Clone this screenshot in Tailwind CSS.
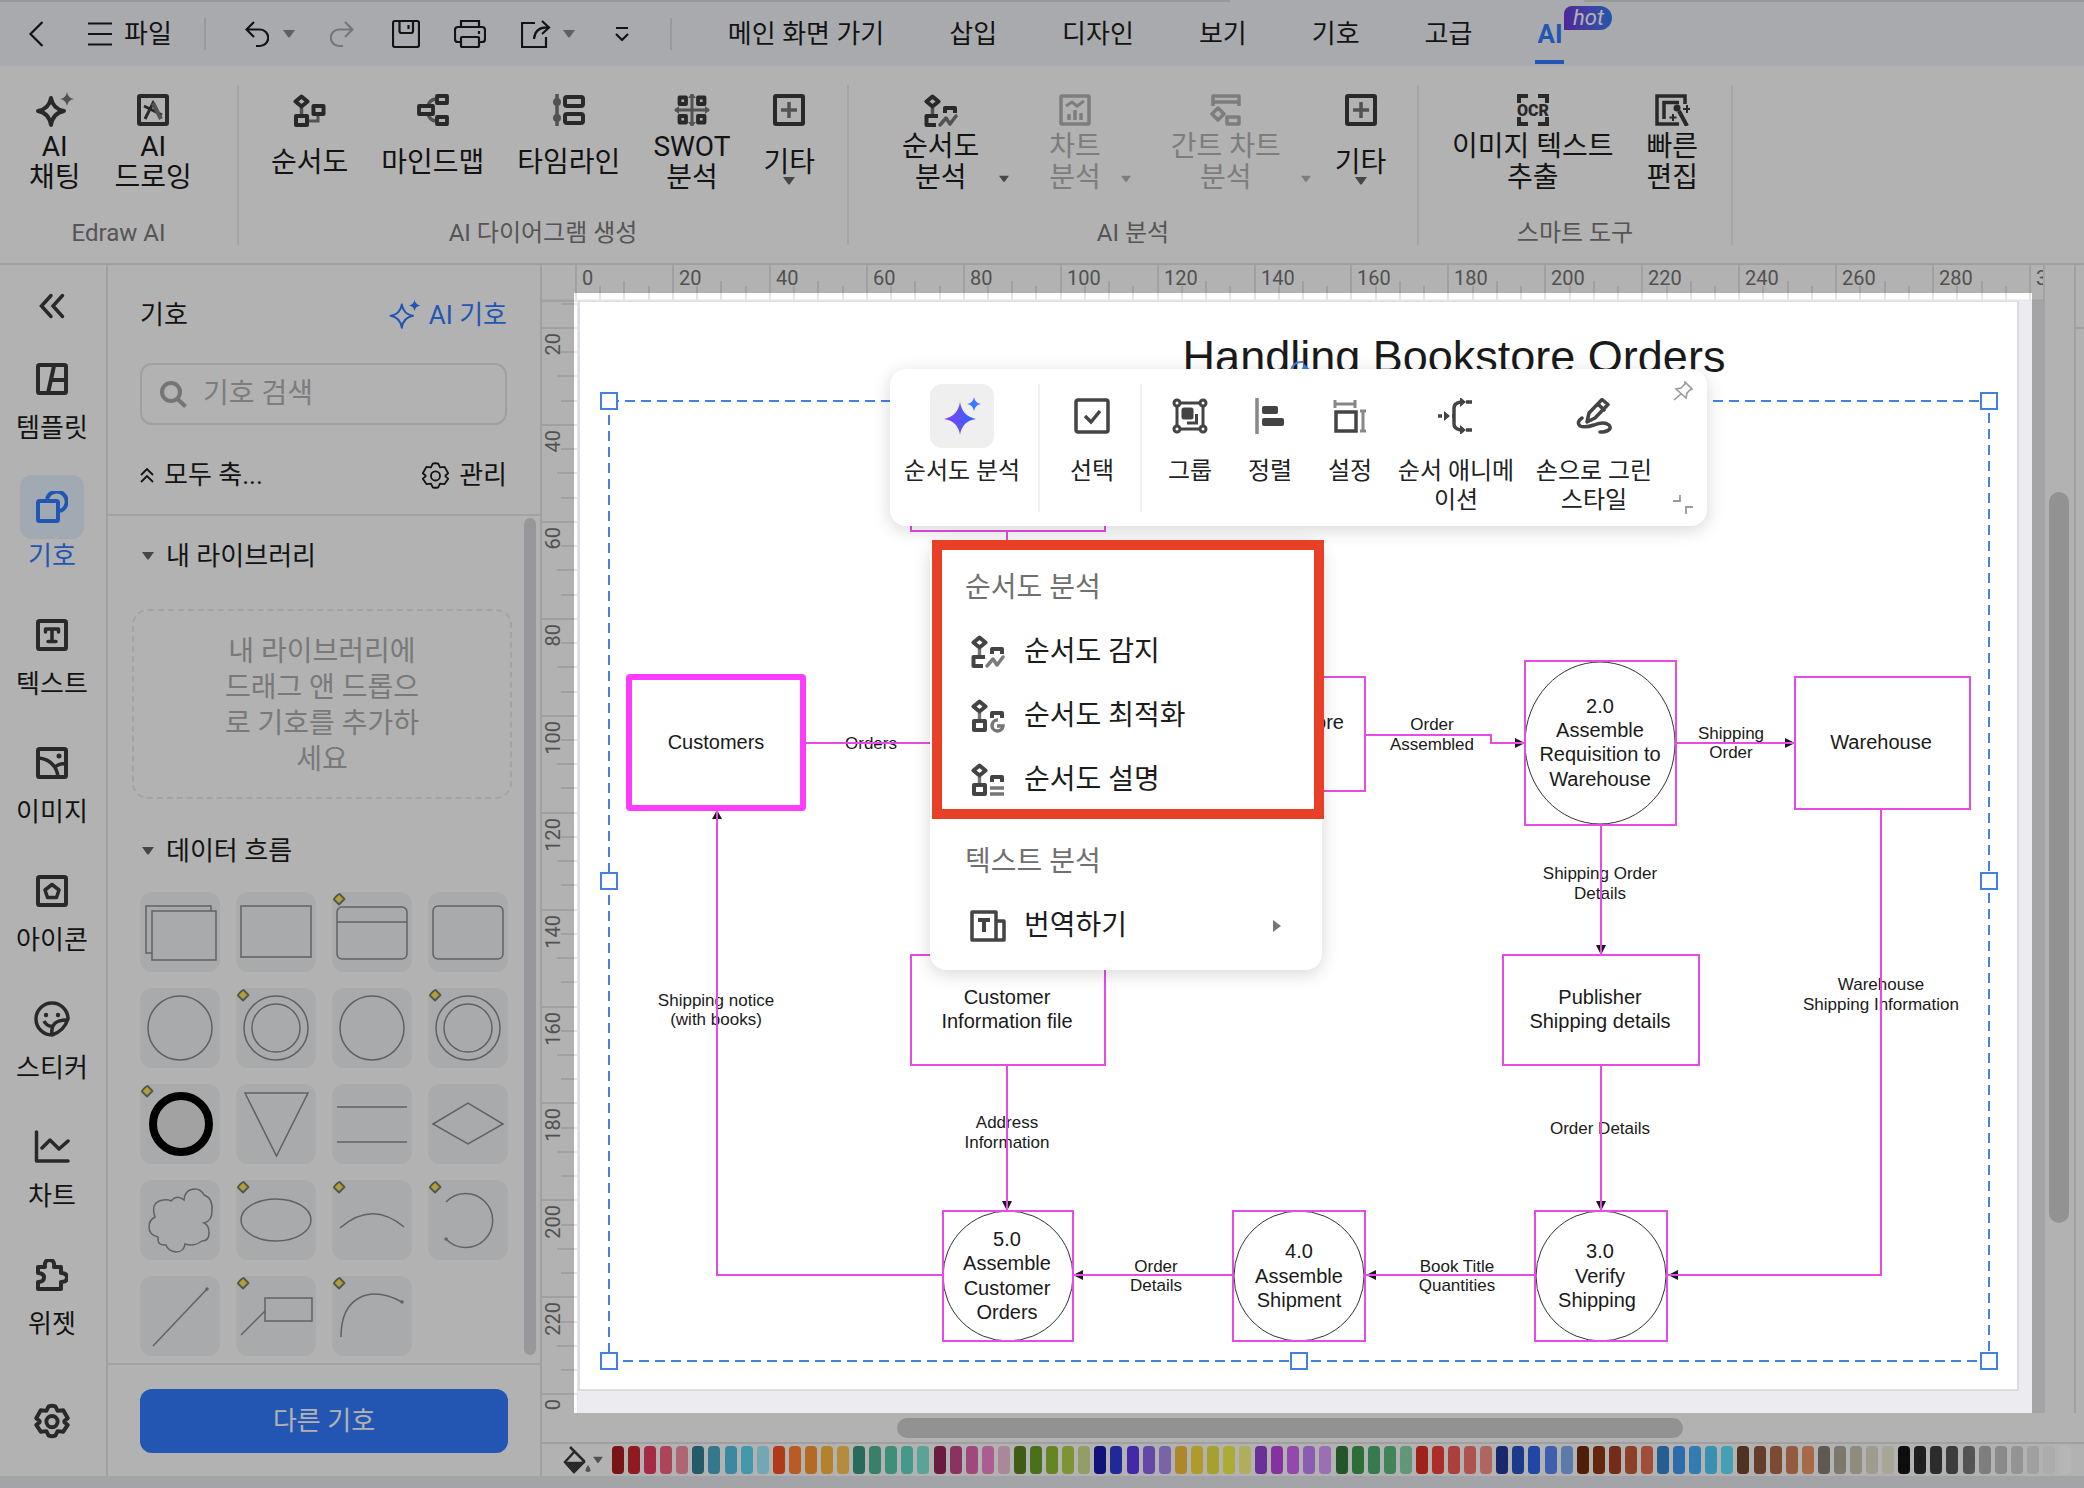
<!DOCTYPE html>
<html lang="ko">
  <head>
    <meta charset="UTF-8" />
    <meta name="viewport" content="width=device-width, initial-scale=1.0" />
    <title>Handling Bookstore Orders</title>
    <script src="https://cdn.jsdelivr.net/npm/@tailwindcss/browser@4"></script>
  </head>
  <body
    class="relative flex flex-col h-screen overflow-hidden bg-white text-[#1c1c1c] font-[Roboto,'Noto_Sans_CJK_KR',sans-serif]"
  >
    <!-- shared icon shapes -->
    <svg class="hidden">
      <symbol id="caret" viewBox="0 0 12 8"><path d="M0 0h12L7 7q-1 1-2 0z" fill="currentColor" /></symbol>
      <symbol id="flow-top" viewBox="0 0 36 34">
        <path d="M9.500 14v8" stroke="#787878" stroke-width="3.500" fill="none" />
        <path d="M9.500 2.500l6 5-6 5-6-5z" fill="none" stroke="currentColor" stroke-width="4" stroke-linejoin="round" />
      </symbol>
      <symbol id="flow-detect" viewBox="0 0 36 34">
        <use href="#flow-top" />
        <path d="M22 19v-5h10v5M15 22H3.500v9H13" fill="none" stroke="currentColor" stroke-width="4" stroke-linejoin="round" />
        <path d="M17 31l6-7 4 6 6-8" fill="none" stroke="currentColor" opacity=".7" stroke-width="3.500" stroke-linejoin="round" stroke-linecap="round" />
      </symbol>
      <symbol id="plus-box" viewBox="0 0 32 32">
        <rect x="2" y="2" width="28" height="28" rx="1" fill="none" stroke="currentColor" stroke-width="4" />
        <path d="M16 8v16M8 16h16" stroke="#787878" stroke-width="3.500" />
      </symbol>
      <symbol id="gear" viewBox="0 0 32 32">
        <path d="M13 3q3-1 6 0l2 4 5-.5 4 7-3 2.500v1l3 2.500-4 6-5-.5-2 4q-3 1-6 0l-2-4-5 .5-4-6 3-2.500v-1L2 13.500l4-7 5 .5z" fill="none" stroke="currentColor" stroke-linejoin="round" />
        <circle cx="16" cy="16.500" r="5" fill="none" stroke="currentColor" />
      </symbol>
      <symbol id="adjust" viewBox="0 0 14 14">
        <path d="M7 1.500L12.500 7 7 12.500 1.500 7z" fill="#ffe64f" stroke="#777" stroke-width="1.800" stroke-linejoin="round" />
      </symbol>
    </svg>

    <!-- title bar -->
    <header class="relative flex items-center h-[66px] shrink-0 pt-0.5 bg-[#f2f4f9] text-[26px] leading-8 whitespace-nowrap pl-7">
      <div class="absolute inset-x-0 top-0 flex justify-between">
        <div class="h-0.5 w-[59%] bg-[#dcdcdc]"></div>
        <div class="h-0.5 w-[24%] bg-[#dcdcdc]"></div>
      </div>
      <button aria-label="back"><svg class="w-4 h-7" viewBox="0 0 16 28" fill="none" stroke="currentColor" stroke-width="2.200"><path d="M14.500 2L2.500 14l12 12" /></svg></button>
      <button class="flex items-center gap-3 ml-11">
        <svg class="w-6 h-6" viewBox="0 0 24 24" stroke="currentColor" stroke-width="2.200"><path d="M0 1.500h24M0 12h24M0 22.500h24" /></svg>
        파일
      </button>
      <div class="ml-8 w-0.5 h-8 bg-[#dcdde2]"></div>
      <button class="ml-[39px]" aria-label="undo"><svg class="w-6 h-7" viewBox="0 0 24 28" fill="none" stroke="currentColor" stroke-width="2.200"><path d="M9 2L1.500 9.500 9 17M2 9.500h13a8 8 0 010 16.500h-4" /></svg></button>
      <svg class="ml-[14px] w-3 h-2 text-[#8a8a8a]"><use href="#caret" /></svg>
      <button class="ml-[35px] text-[#a8a9ad]" aria-label="redo"><svg class="w-6 h-7" viewBox="0 0 24 28" fill="none" stroke="currentColor" stroke-width="2.200"><path d="M15 2l7.500 7.500L15 17M22 9.500H9a8 8 0 000 16.500h4" /></svg></button>
      <button class="ml-[38px]" aria-label="save"><svg class="w-7 h-7" viewBox="0 0 28 28" fill="none" stroke="currentColor" stroke-width="2.200"><rect x="1" y="1" width="26" height="26" rx="2" /><path d="M7.500 1v10q0 2 2 2h9.500q2 0 2-2V1M16.500 5v4" /></svg></button>
      <button class="ml-[34px]" aria-label="print"><svg class="w-8 h-7" viewBox="0 0 32 28" fill="none" stroke="currentColor" stroke-width="2.200"><path d="M7 7V1h18v6M7 22H4q-3 0-3-3v-9q0-3 3-3h24q3 0 3 3v9q0 3-3 3h-3M25 11v3" /><rect x="7" y="17" width="18" height="10" rx="1" /></svg></button>
      <button class="ml-[35px]" aria-label="export"><svg class="w-[30px] h-7" viewBox="0 0 30 28" fill="none" stroke="currentColor" stroke-width="2.200"><path d="M14 3H1v24h24V17M21 1l7 6.500-7 6.500M28 7.500q-14-1-15 11.500" /></svg></button>
      <svg class="ml-3 w-3 h-2 text-[#8a8a8a]"><use href="#caret" /></svg>
      <button class="ml-10" aria-label="more"><svg class="w-[14px] h-4" viewBox="0 0 14 16" fill="none" stroke="currentColor" stroke-width="2.200"><path d="M1 2h12M1 8l6 6 6-6" /></svg></button>
      <div class="ml-[41px] w-0.5 h-8 bg-[#dcdde2]"></div>
      <nav class="flex items-center gap-[65px] ml-14 h-full">
        <button>메인 화면 가기</button>
        <button>삽입</button>
        <button>디자인</button>
        <button>보기</button>
        <button>기호</button>
        <button>고급</button>
        <button class="relative h-full font-bold text-[#337cff]">
          AI
          <span class="absolute left-[27px] top-1 w-12 h-6 rounded-tl-lg rounded-tr-xl rounded-br-xl text-[22px] leading-[23px] italic font-normal text-white bg-linear-to-r from-[#7036d8] to-[#2f7cf6]">hot</span>
          <span class="absolute -inset-x-0.5 bottom-0.5 h-1 bg-[#337cff]"></span>
        </button>
      </nav>
    </header>

    <!-- ribbon -->
    <section class="flex items-start h-[199px] shrink-0 pt-[19px] border-b-2 border-[#e4e4e4] text-[28px] leading-[31px] text-[#1c1c1c] whitespace-nowrap">
      <div class="w-[239px] h-40 border-r-2 border-[#ececec] pt-[9px]">
        <div class="flex gap-[34px] pl-[29px]">
          <button class="flex flex-col items-center gap-[5px]">
            <svg class="w-10 h-9 -my-0.5 text-[#3c3c3c]" viewBox="0 0 40 36"><path d="M16 6q2 11 13 13-11 2-13 14Q14 21 3 19q11-2 13-13z" fill="none" stroke="currentColor" stroke-width="4" stroke-linejoin="round" /><path d="M32 0q1 6 7 7-6 1-7 7-1-6-7-7 6-1 7-7z" fill="#787878" /></svg>
            <span class="flex items-center h-[62px]">AI<br />채팅</span>
          </button>
          <button class="flex flex-col items-center gap-[5px]">
            <svg class="w-8 h-8 text-[#3c3c3c]" viewBox="0 0 32 32"><rect x="2" y="2" width="28" height="28" rx="1" fill="none" stroke="currentColor" stroke-width="4" /><path d="M8 25l8-16 4 8M7 12l18 9" stroke="currentColor" stroke-width="3" fill="none" /><path d="M16 9l8 16" stroke="#787878" stroke-width="4" /></svg>
            <span class="flex items-center h-[62px]">AI<br />드로잉</span>
          </button>
        </div>
        <p class="mt-[25px] text-center text-[24px] leading-[30px] text-[#7a7a7a]">Edraw AI</p>
      </div>
      <div class="w-[610px] h-40 border-r-2 border-[#ececec] pt-[9px]">
        <div class="flex justify-center gap-[33px]">
          <button class="flex flex-col items-center gap-[5px]">
            <svg class="w-9 h-[34px] -mb-0.5 text-[#3c3c3c]" viewBox="0 0 36 34"><use href="#flow-top" /><path d="M16 27h10v-6" fill="none" stroke="#787878" stroke-width="3" /><path d="M4 22h11v9H4zM21.500 12h10v8h-10z" fill="none" stroke="currentColor" stroke-width="4" stroke-linejoin="round" /></svg>
            <span class="flex items-center h-[62px]">순서도</span>
          </button>
          <button class="flex flex-col items-center gap-[5px]">
            <svg class="w-8 h-8 text-[#3c3c3c]" viewBox="0 0 32 32" fill="none"><path d="M20 5q-8 0-9 8M20 27q-8 0-9-8" stroke="#787878" stroke-width="3.500" /><path d="M2 12h14v8H2zM20 2h10v7H20zM20 23h10v7H20z" stroke="currentColor" stroke-width="3.800" stroke-linejoin="round" /></svg>
            <span class="flex items-center h-[62px]">마인드맵</span>
          </button>
          <button class="flex flex-col items-center gap-[5px]">
            <svg class="w-8 h-8 text-[#3c3c3c]" viewBox="0 0 32 32" fill="none"><path d="M4 0v34" stroke="#787878" stroke-width="3.500" /><circle cx="4" cy="8" r="4" fill="#787878" /><circle cx="4" cy="24" r="4" fill="#787878" /><rect x="12" y="3" width="18" height="9" rx="2" stroke="currentColor" stroke-width="4" /><rect x="12" y="20" width="18" height="9" rx="2" stroke="currentColor" stroke-width="4" /></svg>
            <span class="flex items-center h-[62px]">타임라인</span>
          </button>
          <button class="flex flex-col items-center gap-[5px]">
            <svg class="w-9 h-8 text-[#3c3c3c]" viewBox="0 0 36 32" fill="none"><path d="M18 0v32M1 16h34" stroke="#787878" stroke-width="3" /><path d="M14 4l4-5 4 5zM14 28l4 5 4-5zM5 12l-5 4 5 4zM31 12l5 4-5 4z" fill="#787878" /><path d="M5.500 3.500h6.500v6.500H5.500zM24 3.500h6.500v6.500H24zM5.500 22h6.500v6.500H5.500zM24 22h6.500v6.500H24z" stroke="currentColor" stroke-width="3.800" stroke-linejoin="round" /></svg>
            <span class="flex items-center h-[62px]">SWOT<br />분석</span>
          </button>
          <button class="relative flex flex-col items-center gap-[5px]">
            <svg class="w-8 h-8 text-[#3c3c3c]"><use href="#plus-box" /></svg>
            <span class="flex items-center h-[62px]">기타</span>
            <svg class="absolute bottom-2 w-3 h-2 text-[#666]"><use href="#caret" /></svg>
          </button>
        </div>
        <p class="mt-[25px] text-center text-[24px] leading-[30px] text-[#7a7a7a]">AI 다이어그램 생성</p>
      </div>
      <div class="w-[570px] h-40 border-r-2 border-[#ececec] pt-[9px]">
        <div class="flex gap-10 pl-[53px]">
          <div class="flex items-end gap-5">
            <button class="flex flex-col items-center gap-[5px]">
              <svg class="w-9 h-[34px] -mb-0.5 text-[#3c3c3c]"><use href="#flow-detect" /></svg>
              <span class="flex items-center h-[62px]">순서도<br />분석</span>
            </button>
            <svg class="mb-2.5 w-2.5 h-2 text-[#666]"><use href="#caret" /></svg>
          </div>
          <div class="flex items-end gap-5 text-[#b4b4b4]">
            <button class="flex flex-col items-center gap-[5px]" disabled>
              <svg class="w-8 h-8" viewBox="0 0 32 32" fill="none" stroke="currentColor"><rect x="2" y="2" width="28" height="28" rx="1" stroke-width="3.500" /><path d="M7 12l6-4 5 4 7-5" stroke-width="3" /><path d="M10 26v-6M16 26V16M22 26v-7" stroke-width="3.500" /></svg>
              <span class="flex items-center h-[62px]">차트<br />분석</span>
            </button>
            <svg class="mb-2.5 w-2.5 h-2"><use href="#caret" /></svg>
          </div>
          <div class="flex items-end gap-5 text-[#b4b4b4]">
            <button class="flex flex-col items-center gap-[5px]" disabled>
              <svg class="w-8 h-8" viewBox="0 0 32 32" fill="none" stroke="currentColor"><path d="M3 12V2h26v10M3 8h26M8 14l6 6-6 6-6-6zM17 23h12v7H17z" stroke-width="3.500" stroke-linejoin="round" /></svg>
              <span class="flex items-center h-[62px]">간트 차트<br />분석</span>
            </button>
            <svg class="mb-2.5 w-2.5 h-2"><use href="#caret" /></svg>
          </div>
          <button class="relative flex flex-col items-center gap-[5px] -ml-4">
            <svg class="w-8 h-8 text-[#3c3c3c]"><use href="#plus-box" /></svg>
            <span class="flex items-center h-[62px]">기타</span>
            <svg class="absolute bottom-2 w-3 h-2 text-[#666]"><use href="#caret" /></svg>
          </button>
        </div>
        <p class="mt-[25px] text-center text-[24px] leading-[30px] text-[#7a7a7a]">AI 분석</p>
      </div>
      <div class="w-[314px] h-40 border-r-2 border-[#ececec] pt-[9px]">
        <div class="flex justify-center gap-[33px]">
          <button class="flex flex-col items-center gap-[5px]">
            <svg class="w-9 h-8 text-[#3c3c3c]" viewBox="0 0 36 32"><path d="M4 9V2h9M23 2h9v7M4 23v7h9M23 30h9v-7" fill="none" stroke="currentColor" stroke-width="4" /><text x="18" y="22" text-anchor="middle" font-size="16" font-weight="900" fill="currentColor">OCR</text></svg>
            <span class="flex items-center h-[62px]">이미지 텍스트<br />추출</span>
          </button>
          <button class="flex flex-col items-center gap-[5px]">
            <svg class="w-9 h-8 text-[#3c3c3c]" viewBox="0 0 36 32" fill="none" stroke="currentColor"><path d="M31 10V2H3v28h22M25 8.500H10V25" stroke-width="3.500" /><path d="M25 17l8 15" stroke-width="4" /><circle cx="23" cy="14" r="3.500" fill="currentColor" stroke="none" /><path d="M33 11v8M29 15h8M19 20v7M15.500 23.500h7" stroke-width="2" /></svg>
            <span class="flex items-center h-[62px]">빠른<br />편집</span>
          </button>
        </div>
        <p class="mt-[25px] text-center text-[24px] leading-[30px] text-[#7a7a7a]">스마트 도구</p>
      </div>
    </section>

    <main class="flex flex-1 min-h-0">
      <!-- icon rail -->
      <aside class="flex flex-col items-center w-[108px] shrink-0 pr-0.5 border-r-2 border-[#e6e6e6] text-[26px] leading-[34px] whitespace-nowrap">
        <button class="mt-7 mb-7 text-[#3c3c3c]" aria-label="collapse"><svg class="w-[26px] h-[26px]" viewBox="0 0 26 26" fill="none" stroke="currentColor" stroke-width="3.500" stroke-linecap="round"><path d="M12 2.500L2.500 13l9.500 10.500M23.500 2.500L14 13l9.500 10.500" /></svg></button>
        <button class="flex flex-col items-center h-32">
          <span class="grid place-items-center size-16 rounded-xl text-[#3c3c3c]"><svg class="size-8" viewBox="0 0 32 32" fill="none" stroke="currentColor" stroke-width="4"><rect x="2" y="2" width="28" height="28" rx="1.500" /><path d="M18 3l-6 27M15 17h15" /></svg></span>
          템플릿
        </button>
        <button class="flex flex-col items-center h-32 text-[#337cff]">
          <span class="grid place-items-center size-16 rounded-xl bg-[#e7f4ff]"><svg class="size-8" viewBox="0 0 32 32" fill="none" stroke="currentColor" stroke-width="4"><rect x="2" y="10" width="20" height="20" rx="1.500" /><path d="M11 8a10 10 0 1113 12" /></svg></span>
          기호
        </button>
        <button class="flex flex-col items-center h-32">
          <span class="grid place-items-center size-16 rounded-xl text-[#3c3c3c]"><svg class="size-8" viewBox="0 0 32 32" fill="none" stroke="currentColor" stroke-width="4"><rect x="2" y="2" width="28" height="28" rx="1.500" /><path d="M9.500 13v-3h13v3M16 10v12M12 22.500h8" stroke-width="3.500" stroke-linecap="round" stroke-linejoin="round" /></svg></span>
          텍스트
        </button>
        <button class="flex flex-col items-center h-32">
          <span class="grid place-items-center size-16 rounded-xl text-[#3c3c3c]"><svg class="size-8" viewBox="0 0 32 32" fill="none" stroke="currentColor" stroke-width="4"><rect x="2" y="2" width="28" height="28" rx="1.500" /><path d="M3 11q16 2 19 18M18 21q5-5 11-4" stroke-width="3.500" /><circle cx="23" cy="9" r="2.500" fill="currentColor" stroke="none" /></svg></span>
          이미지
        </button>
        <button class="flex flex-col items-center h-32">
          <span class="grid place-items-center size-16 rounded-xl text-[#3c3c3c]"><svg class="size-8" viewBox="0 0 32 32" fill="none" stroke="currentColor" stroke-width="4"><rect x="2" y="2" width="28" height="28" rx="1.500" /><path d="M16 9.500l7 5.500-2.500 7.500h-9L9 15z" stroke-width="3.500" stroke-linejoin="round" /></svg></span>
          아이콘
        </button>
        <button class="flex flex-col items-center h-32">
          <span class="grid place-items-center size-16 rounded-xl text-[#3c3c3c]"><svg class="size-9" viewBox="0 0 36 36" fill="none" stroke="currentColor" stroke-width="3.500"><path d="M18 34A16 16 0 1134 18Q30 30 18 34zM18 34q-2-16 16-15M10 20q3 6 9 5" /><circle cx="12" cy="14" r="2.200" fill="currentColor" stroke="none" /><circle cx="24" cy="14" r="2.200" fill="currentColor" stroke="none" /></svg></span>
          스티커
        </button>
        <button class="flex flex-col items-center h-32">
          <span class="grid place-items-center size-16 rounded-xl text-[#3c3c3c]"><svg class="size-9" viewBox="0 0 36 36" fill="none" stroke="currentColor" stroke-width="3.500" stroke-linecap="round" stroke-linejoin="round"><path d="M2.500 3v29H34M8 19l8-8 9 9 9-8" /></svg></span>
          차트
        </button>
        <button class="flex flex-col items-center h-32">
          <span class="grid place-items-center size-16 rounded-xl text-[#3c3c3c]"><svg class="size-8" viewBox="0 0 32 32" fill="none" stroke="currentColor" stroke-width="4" stroke-linejoin="round"><path d="M2 8h7q-1-7 4.500-7T18 8h7v6q6 0 6 4.500T25 23v7H2v-7q6 0 6-4.500T2 14z" /></svg></span>
          위젯
        </button>
        <button class="mt-8 text-[#3c3c3c]" aria-label="settings"><svg class="size-9" stroke-width="3.500"><use href="#gear" /></svg></button>
      </aside>

      <!-- symbol library -->
      <aside class="flex flex-col w-[434px] shrink-0 border-r-2 border-[#e6e6e6] text-[26px] leading-8 whitespace-nowrap">
        <div class="h-[249px] shrink-0 pl-8 pr-[33px] pt-[34px]">
          <div class="flex justify-between">
            <h2>기호</h2>
            <button class="flex items-center gap-2 text-[#337cff]"><svg class="size-8" viewBox="0 0 40 40"><path d="M16 7q2 12 14 14-12 2-14 15-2-13-14-15 12-2 14-14z" fill="none" stroke="currentColor" stroke-width="2.500" stroke-linejoin="round" /><path d="M32 1q1 6 7 7-6 1-7 7-1-6-7-7 6-1 7-7z" fill="currentColor" /></svg>AI 기호</button>
          </div>
          <label class="flex items-center gap-4 mt-8 h-[62px] pl-[18px] border-2 border-[#e4e4e4] rounded-xl">
            <svg class="size-[27px] shrink-0 text-[#a8a8a8]" viewBox="0 0 27 27" fill="none" stroke="currentColor" stroke-width="4"><circle cx="11" cy="11" r="9" /><path d="M17.500 18l8 7.500" /></svg>
            <input class="w-full text-[28px] outline-none placeholder:text-[#b4b4b4]" type="text" placeholder="기호 검색" aria-label="기호 검색" />
          </label>
          <div class="flex justify-between mt-[34px]">
            <button class="flex items-center gap-2.5"><svg class="w-3.5 h-4" viewBox="0 0 14 16" fill="none" stroke="currentColor" stroke-width="1.800"><path d="M1 8l6-6 6 6M1 15l6-6 6 6" /></svg>모두 축...</button>
            <button class="flex items-center gap-[9px]"><svg class="size-[29px]" stroke-width="2"><use href="#gear" /></svg>관리</button>
          </div>
        </div>
        <div class="relative flex-1 min-h-0 border-y-2 border-[#e8e8e8]">
          <div class="absolute right-1 inset-y-0.5 bottom-2 w-3 rounded-full bg-[#dad9de]"></div>
          <button class="flex items-center gap-3 ml-[34px] mt-6"><svg class="w-3 h-2 text-[#666]"><use href="#caret" /></svg>내 라이브러리</button>
          <p class="ml-6 mt-[37px] w-[380px] h-[190px] py-[23px] border-2 border-dashed border-[#eaeaea] rounded-2xl text-center text-[28px] leading-9 text-[#aeaeae]">
            내 라이브러리에<br />드래그 앤 드롭으<br />로 기호를 추가하<br />세요
          </p>
          <button class="flex items-center gap-3 ml-[34px] mt-9"><svg class="w-3 h-2 text-[#666]"><use href="#caret" /></svg>데이터 흐름</button>
          <div class="grid grid-cols-4 gap-4 w-[368px] ml-8 mt-[25px] text-[#8c8c8c] [&>svg]:size-20 [&>svg]:rounded-xl [&>svg]:bg-[#f2f4f7] [&>svg]:fill-none [&>svg]:stroke-current">
            <svg viewBox="0 0 80 80" stroke-width="1.500"><path d="M12 61H6V14h65v5M12 19h64v49H12z" /></svg>
            <svg viewBox="0 0 80 80" stroke-width="1.500"><path d="M5 14h70v51H5z" /></svg>
            <svg viewBox="0 0 80 80" stroke-width="1.500"><rect x="5" y="15" width="70" height="52" rx="5" /><path d="M5 30h70" /><use href="#adjust" width="14" height="14" /></svg>
            <svg viewBox="0 0 80 80" stroke-width="1.500"><rect x="5" y="14" width="70" height="53" rx="5" /></svg>
            <svg viewBox="0 0 80 80" stroke-width="1.500"><circle cx="40" cy="40" r="32" /></svg>
            <svg viewBox="0 0 80 80" stroke-width="1.500"><circle cx="40" cy="40" r="32" /><circle cx="40" cy="40" r="24" /><use href="#adjust" width="14" height="14" /></svg>
            <svg viewBox="0 0 80 80" stroke-width="1.500"><circle cx="40" cy="40" r="32" /></svg>
            <svg viewBox="0 0 80 80" stroke-width="1.500"><circle cx="40" cy="40" r="32" /><circle cx="40" cy="40" r="24" /><use href="#adjust" width="14" height="14" /></svg>
            <svg viewBox="0 0 80 80"><circle cx="41" cy="40" r="28" fill="#e9e9e9" stroke="#000" stroke-width="8" /><use href="#adjust" width="14" height="14" /></svg>
            <svg viewBox="0 0 80 80" stroke-width="1.500"><path d="M9 9h63L40.500 72z" /></svg>
            <svg viewBox="0 0 80 80" stroke-width="1.500"><path d="M5 23h70M5 58h70" /></svg>
            <svg viewBox="0 0 80 80" stroke-width="1.500"><path d="M5 40l35-21 35 21-35 20z" /></svg>
            <svg viewBox="0 0 80 80" stroke-width="1.500"><path d="M15 37Q10 22 23 20q5-1 8 1 6-7 13-1Q45 9 55 9q6 0 9 6 9 3 8 16 0 10-8 12 5 2 5 10 0 8-7 8-8 6-17 3-1 8-9 8-8-1-10-7-9 1-8-8-9-2-9-10 0-7 6-10z" /></svg>
            <svg viewBox="0 0 80 80" stroke-width="1.500"><ellipse cx="40" cy="40" rx="35" ry="21" /><use href="#adjust" width="14" height="14" /></svg>
            <svg viewBox="0 0 80 80" stroke-width="1.500"><path d="M8 48q32-28 64-1" /><use href="#adjust" width="14" height="14" /></svg>
            <svg viewBox="0 0 80 80" stroke-width="1.500"><path d="M18 22a27 27 0 110 37" /><circle cx="18" cy="59" r="1" /><use href="#adjust" width="14" height="14" /></svg>
            <svg viewBox="0 0 80 80" stroke-width="1.500"><path d="M13 70l54-57" /><circle cx="67" cy="13" r="1" /></svg>
            <svg viewBox="0 0 80 80" stroke-width="1.500"><path d="M29 22h47v23H29zM29 35L5 59" /><use href="#adjust" width="14" height="14" /></svg>
            <svg viewBox="0 0 80 80" stroke-width="1.500"><path d="M9 61C9 20 38 9 70 26" /><circle cx="70" cy="26" r="1" /><use href="#adjust" width="14" height="14" /></svg>
          </div>
        </div>
        <div class="h-[111px] shrink-0 pl-8 pr-8 pt-6">
          <button class="w-full h-16 rounded-xl bg-[#337cff] text-white">다른 기호</button>
        </div>
      </aside>

      <!-- workspace -->
      <section class="flex flex-col flex-1 min-w-0">
        <div class="flex flex-1 min-h-0">
          <div class="flex flex-col flex-1 min-w-0 border-r-2 border-[#e9e8f0]">
            <div class="h-9 shrink-0 overflow-hidden">
              <svg id="rulerTop" class="w-[2400px] h-9 text-[20px] fill-[#757575]"></svg>
            </div>
            <div class="flex flex-1 min-h-0">
              <div class="w-9 shrink-0 overflow-hidden border-t border-[#e8e8ec]">
                <svg id="rulerLeft" class="w-9 h-[1600px] text-[20px] fill-[#757575]"></svg>
              </div>
              <div class="flex-1 min-w-0 overflow-hidden bg-[#ebebf0]">
                <svg class="w-[1467px] h-[1112px] font-['Liberation_Sans',sans-serif] fill-[#1a1a1a]" viewBox="578 301 1467 1112">
                  <rect x="579" y="301" width="1439" height="1089" fill="#fff" stroke="#d4d4d9" stroke-width="1.500" />
                  <text x="1454" y="372" text-anchor="middle" font-size="45">Handling Bookstore Orders</text>

                  <g fill="none" stroke="#333" stroke-width="1">
                    <ellipse cx="1600" cy="743" rx="75" ry="81" />
                    <circle cx="1008" cy="1276" r="65" />
                    <circle cx="1299" cy="1276" r="65" />
                    <circle cx="1601" cy="1276" r="65" />
                  </g>

                  <g text-anchor="middle" font-size="20">
                    <text x="716" y="749">Customers</text>
                    <text x="1344" y="729" text-anchor="end">Bookstore</text>
                    <text><tspan x="1600" y="713">2.0</tspan><tspan x="1600" y="737">Assemble</tspan><tspan x="1600" y="761">Requisition to</tspan><tspan x="1600" y="786">Warehouse</tspan></text>
                    <text x="1881" y="749">Warehouse</text>
                    <text><tspan x="1007" y="1004">Customer</tspan><tspan x="1007" y="1028">Information file</tspan></text>
                    <text><tspan x="1600" y="1004">Publisher</tspan><tspan x="1600" y="1028">Shipping details</tspan></text>
                    <text><tspan x="1007" y="1246">5.0</tspan><tspan x="1007" y="1270">Assemble</tspan><tspan x="1007" y="1295">Customer</tspan><tspan x="1007" y="1319">Orders</tspan></text>
                    <text><tspan x="1299" y="1258">4.0</tspan><tspan x="1299" y="1283">Assemble</tspan><tspan x="1299" y="1307">Shipment</tspan></text>
                    <text><tspan x="1600" y="1258">3.0</tspan><tspan x="1600" y="1283">Verify</tspan><tspan x="1597" y="1307">Shipping</tspan></text>
                  </g>
                  <g text-anchor="middle" font-size="17">
                    <text x="871" y="749">Orders</text>
                    <text><tspan x="1432" y="730">Order</tspan><tspan x="1432" y="750">Assembled</tspan></text>
                    <text><tspan x="1731" y="739">Shipping</tspan><tspan x="1731" y="758">Order</tspan></text>
                    <text><tspan x="1600" y="879">Shipping Order</tspan><tspan x="1600" y="899">Details</tspan></text>
                    <text><tspan x="716" y="1006">Shipping notice</tspan><tspan x="716" y="1025">(with books)</tspan></text>
                    <text><tspan x="1881" y="990">Warehouse</tspan><tspan x="1881" y="1010">Shipping Information</tspan></text>
                    <text><tspan x="1007" y="1128">Address</tspan><tspan x="1007" y="1148">Information</tspan></text>
                    <text x="1600" y="1134">Order Details</text>
                    <text><tspan x="1156" y="1272">Order</tspan><tspan x="1156" y="1291">Details</tspan></text>
                    <text><tspan x="1457" y="1272">Book Title</tspan><tspan x="1457" y="1291">Quantities</tspan></text>
                  </g>

                  <!-- arrow heads -->
                  <path d="M1515 738v10l10-5zM1785 738v10l10-5zM1596 945h10l-5 10zM1002 1201h10l-5 10zM1596 1201h10l-5 10zM712 819h10l-5-9zM1083 1270v10l-10-5zM1376 1270v10l-10-5zM1678 1270v10l-10-5z" />

                  <g fill="none" stroke="#e64be6" stroke-width="2">
                    <path d="M911 420h194v111H911zM1007 531v60M806 743h130" />
                    <path d="M1233 677h132v114h-132zM1365 735h126v8h34M1676 743h119M1601 825v130M1881 809v466h-213" />
                    <path d="M1525 661h151v164h-151zM1795 677h175v132h-175zM911 955h194v110H911zM1503 955h196v110h-196z" />
                    <path d="M943 1211h130v130H943zM1233 1211h132v130h-132zM1535 1211h132v130h-132z" />
                    <path d="M1007 1065v146M1601 1065v146M1535 1275h-170M1233 1275h-160M943 1275H717V811" />
                  </g>
                  <rect x="629" y="677" width="174" height="131" rx="1" fill="none" stroke="#ff3cff" stroke-width="6" stroke-linejoin="round" />

                  <!-- selection frame -->
                  <path d="M609 401h1380v960H609z" fill="none" stroke="#4480e0" stroke-width="2" stroke-dasharray="10 6" />
                  <g fill="#fff" stroke="#4480e0" stroke-width="2">
                    <path d="M601 393h16v16h-16zM1981 393h16v16h-16zM601 873h16v16h-16zM1981 873h16v16h-16zM601 1353h16v16h-16zM1291 1353h16v16h-16zM1981 1353h16v16h-16z" />
                  </g>
                  <path d="M1291 371q2-10 12-9" fill="none" stroke="#4480e0" stroke-width="2" />
                  <path d="M1304 364l8 7h-11z" fill="#3a7cf0" />
                </svg>
              </div>
            </div>
          </div>
          <div class="w-[29px] shrink-0 pl-1 pt-[227px]">
            <div class="w-5 h-[731px] rounded-full bg-[#d1d1d1]"></div>
          </div>
          <div class="w-2.5 shrink-0 border-l-2 border-[#e6e6e6] pt-[62px]"><div class="h-0.5 bg-[#e6e6e6]"></div></div>
        </div>
        <div class="flex items-center h-[29px] shrink-0 pl-[23%] pr-[26%]">
          <div class="w-full h-5 rounded-full bg-[#d1d1d1]"></div>
        </div>
        <div class="flex items-center h-[34px] shrink-0 pl-[21px] pr-3 border-t-2 border-[#e6e6e6]">
          <button class="flex items-center gap-0.5 text-[#3c3c3c]" aria-label="fill color">
            <svg class="w-7 h-7" viewBox="0 0 28 28" fill="none" stroke="currentColor" stroke-width="2.500"><path d="M7 1l4 4 10 10-10 11L2 16 12 5" stroke-linejoin="round" /><path d="M3 17h17l-9 9z" fill="currentColor" /><path d="M25 19q-5 7 0 7t0-7" fill="#777" stroke="none" /></svg>
            <svg class="w-2.5 h-2 text-[#777]"><use href="#caret" /></svg>
          </button>
          <div id="palette" class="relative z-20 flex flex-1 justify-between ml-[9px]"></div>
        </div>
      </section>
    </main>

    <footer class="h-3 shrink-0 bg-[#eaebf0]"></footer>

    <!-- dimming with a bright window over the canvas -->
    <div class="absolute z-10 left-[574px] top-[293px] right-[52px] bottom-[75px] pointer-events-none shadow-[0_0_0_3000px_rgba(0,0,0,0.3)]"></div>

    <!-- floating toolbar -->
    <div class="absolute z-30 left-[890px] top-[369px] w-[817px] h-[157px] flex pt-[15px] bg-white rounded-2xl shadow-[0_4px_18px_rgba(0,0,0,0.16)] text-[24px] leading-[29px] text-[#222] whitespace-nowrap">
      <button class="flex flex-col items-center gap-[9px] w-36 h-[131px]">
        <span class="grid place-items-center size-16 rounded-xl bg-[#efefef]">
          <svg class="size-10" viewBox="0 0 40 40">
            <defs><linearGradient id="spark"><stop stop-color="#8a3df0" /><stop offset="1" stop-color="#2a68ff" /></linearGradient></defs>
            <path d="M18 6q2 14 16 17-14 2-16 16Q16 25 2 23 16 20 18 6z" fill="url(#spark)" />
            <path d="M32 1q1 6 7 7-6 1-7 7-1-6-7-7 6-1 7-7z" fill="#3a78ff" />
          </svg>
        </span>
        순서도 분석
      </button>
      <div class="w-0.5 h-32 ml-1 mr-3 bg-[#efefef]"></div>
      <button class="flex flex-col items-center gap-[9px] w-20 h-[131px]">
        <span class="grid place-items-center size-16 text-[#444]"><svg class="size-9" viewBox="0 0 36 36" fill="none" stroke="currentColor" stroke-width="3.500"><rect x="2" y="2" width="32" height="32" rx="2" /><path d="M11 18l6 6 9-11" /></svg></span>
        선택
      </button>
      <div class="w-0.5 h-32 mx-2 bg-[#efefef]"></div>
      <button class="flex flex-col items-center gap-[9px] w-20 h-[131px]">
        <span class="grid place-items-center size-16 text-[#444]"><svg class="size-9" viewBox="0 0 36 36" fill="none" stroke="currentColor" stroke-width="3"><path d="M5 5h26v26H5z" /><g fill="#fff"><circle cx="5" cy="5" r="3" /><circle cx="31" cy="5" r="3" /><circle cx="5" cy="31" r="3" /><circle cx="31" cy="31" r="3" /></g><rect x="11" y="11" width="9" height="9" rx="1" fill="currentColor" /><path d="M24.500 16v9H15" /></svg></span>
        그룹
      </button>
      <button class="flex flex-col items-center gap-[9px] w-20 h-[131px]">
        <span class="grid place-items-center size-16 text-[#444]"><svg class="size-9" viewBox="0 0 36 36"><path d="M5 0v36" stroke="#888" stroke-width="3.500" /><rect x="10" y="8" width="16" height="8" rx="2" fill="currentColor" /><rect x="10" y="20" width="22" height="8" rx="2" fill="currentColor" /></svg></span>
        정렬
      </button>
      <button class="flex flex-col items-center gap-[9px] w-20 h-[131px]">
        <span class="grid place-items-center size-16 text-[#444]"><svg class="size-9" viewBox="0 0 36 36" fill="none"><path d="M3 6h20M3 2v8M23 2v8M31 13v20M28 13h6M28 33h6" stroke="#888" stroke-width="3" /><rect x="4" y="14" width="20" height="19" stroke="currentColor" stroke-width="3.500" /></svg></span>
        설정
      </button>
      <button class="flex flex-col items-center gap-[9px] w-[132px] h-[131px]">
        <span class="grid place-items-center size-16 text-[#444]"><svg class="size-9" viewBox="0 0 36 36" fill="none" stroke="currentColor" stroke-width="3"><path d="M23 4q-7 1-7 6v16q0 5 7 6M0 18h4M28 4h6M28 32h6M16 18h-2" stroke-width="3.500" /><path d="M6 13l6 5-6 5zM22-1l6 5-6 5zM22 27l6 5-6 5z" fill="currentColor" stroke="none" /></svg></span>
        <span>순서 애니메<br />이션</span>
      </button>
      <button class="flex flex-col items-center gap-[9px] w-36 h-[131px]">
        <span class="grid place-items-center size-16 text-[#444]"><svg class="size-9" viewBox="0 0 36 36" fill="none" stroke="currentColor" stroke-width="3.500" stroke-linecap="round" stroke-linejoin="round"><path d="M11 24l2-9L26 1.500l6 5L19 20zM22 6l6 6M6 20q-6 4-2 8 5 2 14-1 10-4 15 0 4 5-6 7h-3" /></svg></span>
        <span>손으로 그린<br />스타일</span>
      </button>
      <svg class="absolute right-3.5 top-3 size-5" viewBox="0 0 20 20" fill="none" stroke="#999" stroke-width="1.600"><path d="M12 1l7 7-2 1-3 3-1 5L3 8l5-1 4-4zM8 13l-7 6" /></svg>
      <svg class="absolute right-3.5 bottom-3 size-5" viewBox="0 0 20 20" fill="none" stroke="#999" stroke-width="1.800"><path d="M7 1v6H0M13 20v-7h7" /></svg>
    </div>

    <!-- analysis menu -->
    <div class="absolute z-30 left-[930px] top-[541px] w-[392px] pt-[15px] pb-3 bg-white rounded-2xl shadow-[0_4px_18px_rgba(0,0,0,0.16)] text-[28px] leading-[64px] whitespace-nowrap">
      <h3 class="pl-[35px] text-[#707070]">순서도 분석</h3>
      <button class="flex items-center gap-[18px] w-full h-16 pl-10">
        <svg class="w-9 h-[34px] text-[#444]"><use href="#flow-detect" /></svg>순서도 감지
      </button>
      <button class="flex items-center gap-[18px] w-full h-16 pl-10">
        <svg class="w-9 h-[34px] text-[#444]" viewBox="0 0 36 34" fill="none"><use href="#flow-top" /><path d="M4 22h11v9H4zM22 19v-5h10v5" stroke="currentColor" stroke-width="4" stroke-linejoin="round" /><path d="M28 21a5.500 5.500 0 105 6h-6" stroke="#777" stroke-width="3.500" /></svg>순서도 최적화
      </button>
      <button class="flex items-center gap-[18px] w-full h-16 pl-10">
        <svg class="w-9 h-[34px] text-[#444]" viewBox="0 0 36 34" fill="none"><use href="#flow-top" /><path d="M4 22h11v9H4zM22 19v-5h10v5" stroke="currentColor" stroke-width="4" stroke-linejoin="round" /><path d="M20 25h14M20 31h14" stroke="#777" stroke-width="3.500" /></svg>순서도 설명
      </button>
      <h3 class="mt-[18px] pl-[35px] text-[#707070]">텍스트 분석</h3>
      <button class="flex items-center gap-[18px] w-full h-16 pl-10 pr-10">
        <svg class="size-9 text-[#444]" viewBox="0 0 36 36" fill="none" stroke="currentColor" stroke-width="3.500"><path d="M26 32V4H2v28h32V13h-8" stroke-linejoin="round" /><path d="M8 12h12M14 12v12" stroke-width="4" /></svg>번역하기
        <svg class="ml-auto w-2.5 h-3" viewBox="0 0 10 12"><path d="M1 0l8 6-8 6z" fill="#777" /></svg>
      </button>
      <div class="absolute left-0.5 -top-px w-[392px] h-[279px] border-[10px] border-[#e84027]"></div>
    </div>

    <script>
      const NS = "http://www.w3.org/2000/svg";
      const step = 1454 / 60;

      const add = (parent, name, attrs, text) => {
        const el = document.createElementNS(NS, name);
        for (const key in attrs) el.setAttribute(key, attrs[key]);
        if (text !== undefined) el.textContent = text;
        parent.appendChild(el);
      };

      const rulerTop = document.getElementById("rulerTop");
      const rulerLeft = document.getElementById("rulerLeft");

      add(rulerTop, "path", { d: "M0 35.5H2400", stroke: "#e6e6ea", "stroke-width": 2 });
      for (let i = 0; i <= 60; i++) {
        const x = Math.round(34 + i * step);
        const from = i % 4 === 0 ? 0 : i % 4 === 2 ? 16 : 21;
        add(rulerTop, "path", { d: `M${x} ${from}V36`, stroke: "#e6e6ea", "stroke-width": 2 });
        if (i % 4 === 0) add(rulerTop, "text", { x: x + 6, y: 20 }, i * 5);
      }

      add(rulerLeft, "path", { d: "M35.5 0V1600", stroke: "#e6e6ea", "stroke-width": 1 });
      for (let i = -1; i <= 44; i++) {
        const y = Math.round(26 + i * step);
        const from = i % 4 === 0 ? 0 : i % 4 === 2 ? 15 : 19;
        add(rulerLeft, "path", { d: `M${from} ${y}H36`, stroke: "#e6e6ea", "stroke-width": 2 });
        // the last number is cut by the canvas edge, only its final digit shows
        if (i % 4 === 0)
          add(
            rulerLeft,
            "text",
            { transform: `translate(18 ${y + 5}) rotate(-90)`, "text-anchor": "end" },
            i === 44 ? 0 : 20 + i * 5
          );
      }

      const colors =
        "7a1414 8f1a20 a62a44 ad4459 ae6673 235a68 33788c 3a88a2 4199ab 73a7b3 b0391a b85c24 b46a20 b5822c b58b3c " +
        "2a6a5a 38806a 3e8f78 45998a 5ba396 6a1c40 8a3360 a0487a ab5c90 a98898 3e5c14 4b701c 668522 7d9434 929e66 " +
        "10147a 1f2a96 4428a8 6448a8 7a64a8 ad8828 b09a2c a6a02e acac34 aeae5c 6a3098 8432a0 9448ac 8a5cb2 9c6eb2 " +
        "22562a 2d6e38 357a50 408458 629676 a0201a ac2e26 ac3e3e ae5250 b06660 18286e 1c3a8c 2046a6 3e5eae 5c7aaa " +
        "4e1e08 66260c 742c18 8c4028 a04e3a 265e94 2c6cac 327cb2 3a90b0 44a0b4 4e3222 643e2a 7c4c32 925a3e a86a46 " +
        "605852 7c786c 8e8c7e 9e9c90 a8a694 0e0e0e 1e1e1e 2c2c2c 3c3c3c 545454 7e7e7e 8a8a8a 949494 a0a0a0 acacac b6b6b6";
      document.getElementById("palette").innerHTML = colors
        .split(" ")
        .map((c) => `<span class="w-3 h-7 rounded" style="background:#${c}"></span>`)
        .join("");
    </script>
  </body>
</html>
